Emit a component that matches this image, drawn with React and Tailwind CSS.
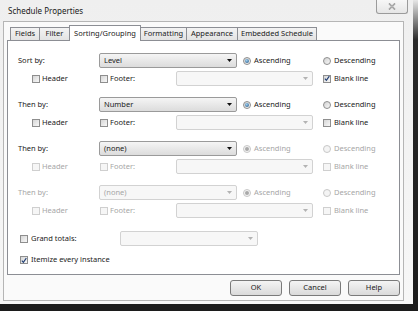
import React from "react";

function Check({ checked = false, disabled = false }) {
  return (
    <span
      className={`flex h-[8px] w-[8px] shrink-0 items-center justify-center border ${
        disabled
          ? "border-[#cfcfcf] bg-[#f6f6f6]"
          : "border-[#8e8e8e] bg-gradient-to-br from-[#d6d6d6] to-[#f8f8f8]"
      }`}
    >
      {checked && (
        <svg width="7" height="7" viewBox="0 0 7 7">
          <path d="M1 3.6 L2.8 5.6 L6.2 0.8" fill="none" stroke="#1f3d73" strokeWidth="1.3" />
        </svg>
      )}
    </span>
  );
}

function Radio({ on = false, disabled = false }) {
  return (
    <span
      className={`flex h-[8px] w-[8px] shrink-0 items-center justify-center rounded-full border ${
        disabled
          ? "border-[#c8c8c8] bg-[#f4f4f4]"
          : "border-[#8e8e8e] bg-gradient-to-br from-[#d2d2d2] to-[#f8f8f8]"
      }`}
    >
      {on && (
        <span
          className={`h-[4px] w-[4px] rounded-full ${
            disabled ? "bg-[#a9a9a9]" : "bg-[radial-gradient(circle_at_40%_35%,#9fd0f0,#1b4f80)]"
          }`}
        />
      )}
    </span>
  );
}

function Select({ value = "", w, disabled = false }) {
  return (
    <div
      className={`flex h-[15px] ${w} shrink-0 items-center justify-between rounded-[2px] border pl-[4px] pr-[4px] ${
        disabled
          ? "border-[#d2d2d2] bg-[#f7f7f7] text-[#a6a6a6]"
          : "border-[#9a9a9a] bg-gradient-to-b from-[#f5f5f5] to-[#dcdcdc] text-[#1a1a1a]"
      }`}
    >
      <span>{value}</span>
      <svg width="5" height="3" viewBox="0 0 5 3">
        <path d="M0 0H5L2.5 3Z" fill={disabled ? "#b3b3b3" : "#111111"} />
      </svg>
    </div>
  );
}

function Button({ children }) {
  return (
    <div className="flex h-[16px] w-[52px] items-center justify-center rounded-[3px] border border-[#7a7a7a] bg-gradient-to-b from-[#f4f4f4] to-[#dadada] text-[#1a1a1a]">
      {children}
    </div>
  );
}

const tabs = [
  { t: "Fields", w: "w-[30px]" },
  { t: "Filter", w: "w-[31px]" },
  { t: "Sorting/Grouping", w: "w-[72px]", sel: true },
  { t: "Formatting", w: "w-[47px]" },
  { t: "Appearance", w: "w-[52px]" },
  { t: "Embedded Schedule", w: "w-[80px]" },
];

const groups = [
  { label: "Sort by:", value: "Level", en: true, sub: true, blank: true },
  { label: "Then by:", value: "Number", en: true, sub: true, blank: false },
  { label: "Then by:", value: "(none)", en: true, sub: false, blank: false },
  { label: "Then by:", value: "(none)", en: false, sub: false, blank: false },
];

export default function App() {
  return (
    <div className="flex h-[311px] w-[418px] flex-col bg-[#1c1c1c] font-['Noto_Sans','Liberation_Sans',sans-serif] text-[7.5px] leading-none text-[#1a1a1a]">
      <div className="flex h-[304px] w-[418px]">
        <div className="flex h-[304px] w-[413px] flex-col bg-gradient-to-b from-[#efefef] to-[#f7f7f7]">
          {/* title bar */}
          <div className="flex h-[21px] items-start justify-between">
            <div className="pl-[8px] pt-[7px] text-[8px] text-[#1a1a1a]">Schedule Properties</div>
            <div className="mr-[5px] flex h-[14px] w-[32px] items-center justify-center rounded-b-[3px] border border-t-0 border-[#9b9b9b] bg-gradient-to-b from-[#f7f7f7] to-[#e6e6e6]">
              <svg width="8" height="7" viewBox="0 0 8 7">
                <path d="M1 0.5 L7 6.5 M7 0.5 L1 6.5" stroke="#8a8a8a" strokeWidth="1.6" />
                <path d="M1 0.5 L7 6.5 M7 0.5 L1 6.5" stroke="#f2f2f2" strokeWidth="0.5" />
              </svg>
            </div>
          </div>
          {/* client */}
          <div className="ml-[3px] flex h-[280px] w-[401px] flex-col border border-[#b5b5b5] bg-[#fafafa] px-[3px] pt-[3px]">
            {/* tabs */}
            <div className="flex h-[15px] items-end pl-[3px]">
              {tabs.map((tab, i) => (
                <div
                  key={tab.t}
                  className={`flex ${tab.w} items-center justify-center border border-b-0 ${
                    i > 0 ? "-ml-px" : ""
                  } ${
                    tab.sel
                      ? "relative z-10 -mb-px h-[16px] border-[#8c8e94] bg-white"
                      : "h-[13px] border-[#8c8e94] bg-gradient-to-b from-[#f3f3f3] to-[#e3e3e3]"
                  }`}
                >
                  {tab.t}
                </div>
              ))}
            </div>
            {/* panel */}
            <div className="flex h-[235px] flex-col border border-[#8c8e94] bg-white pl-[10px] pt-[12px]">
              <div className="flex flex-col gap-[11px]">
                {groups.map((g, i) => {
                  const lc = g.en ? "text-[#1a1a1a]" : "text-[#a6a6a6]";
                  const sc = g.sub ? "text-[#1a1a1a]" : "text-[#a6a6a6]";
                  return (
                    <div key={i} className="flex flex-col gap-[3px]">
                      <div className="flex h-[15px] items-center">
                        <div className={`w-[81px] ${lc}`}>{g.label}</div>
                        <Select value={g.value} w="w-[138px]" disabled={!g.en} />
                        <div className={`ml-[6px] flex w-[80px] items-center gap-[3px] ${sc}`}>
                          <Radio on disabled={!g.sub} />
                          <span>Ascending</span>
                        </div>
                        <div className={`flex items-center gap-[3px] ${sc}`}>
                          <Radio disabled={!g.sub} />
                          <span>Descending</span>
                        </div>
                      </div>
                      <div className="flex h-[15px] items-center">
                        <div className={`ml-[14px] flex w-[68px] items-center gap-[2px] ${sc}`}>
                          <Check disabled={!g.sub} />
                          <span>Header</span>
                        </div>
                        <div className={`flex w-[76px] items-center gap-[2px] ${sc}`}>
                          <Check disabled={!g.sub} />
                          <span>Footer:</span>
                        </div>
                        <Select w="w-[137px]" disabled />
                        <div className={`ml-[10px] flex items-center gap-[3px] ${sc}`}>
                          <Check checked={g.blank} disabled={!g.sub} />
                          <span>Blank line</span>
                        </div>
                      </div>
                    </div>
                  );
                })}
              </div>
              <div className="mt-[13px] flex h-[15px] items-center">
                <div className="ml-[2px] flex w-[100px] items-center gap-[3px]">
                  <Check />
                  <span>Grand totals:</span>
                </div>
                <Select w="w-[138px]" disabled />
              </div>
              <div className="mt-[7px] flex h-[14px] items-center">
                <div className="ml-[2px] flex items-center gap-[3px]">
                  <Check checked />
                  <span>Itemize every instance</span>
                </div>
              </div>
            </div>
            {/* buttons */}
            <div className="mt-[5px] flex justify-end gap-[7px]">
              <Button>OK</Button>
              <Button>Cancel</Button>
              <Button>Help</Button>
            </div>
          </div>
        </div>
        <div className="h-[304px] w-[5px] bg-[linear-gradient(to_bottom,#e6e6e6,#2a2a2a_40px,#1c1c1c)]" />
      </div>
    </div>
  );
}
